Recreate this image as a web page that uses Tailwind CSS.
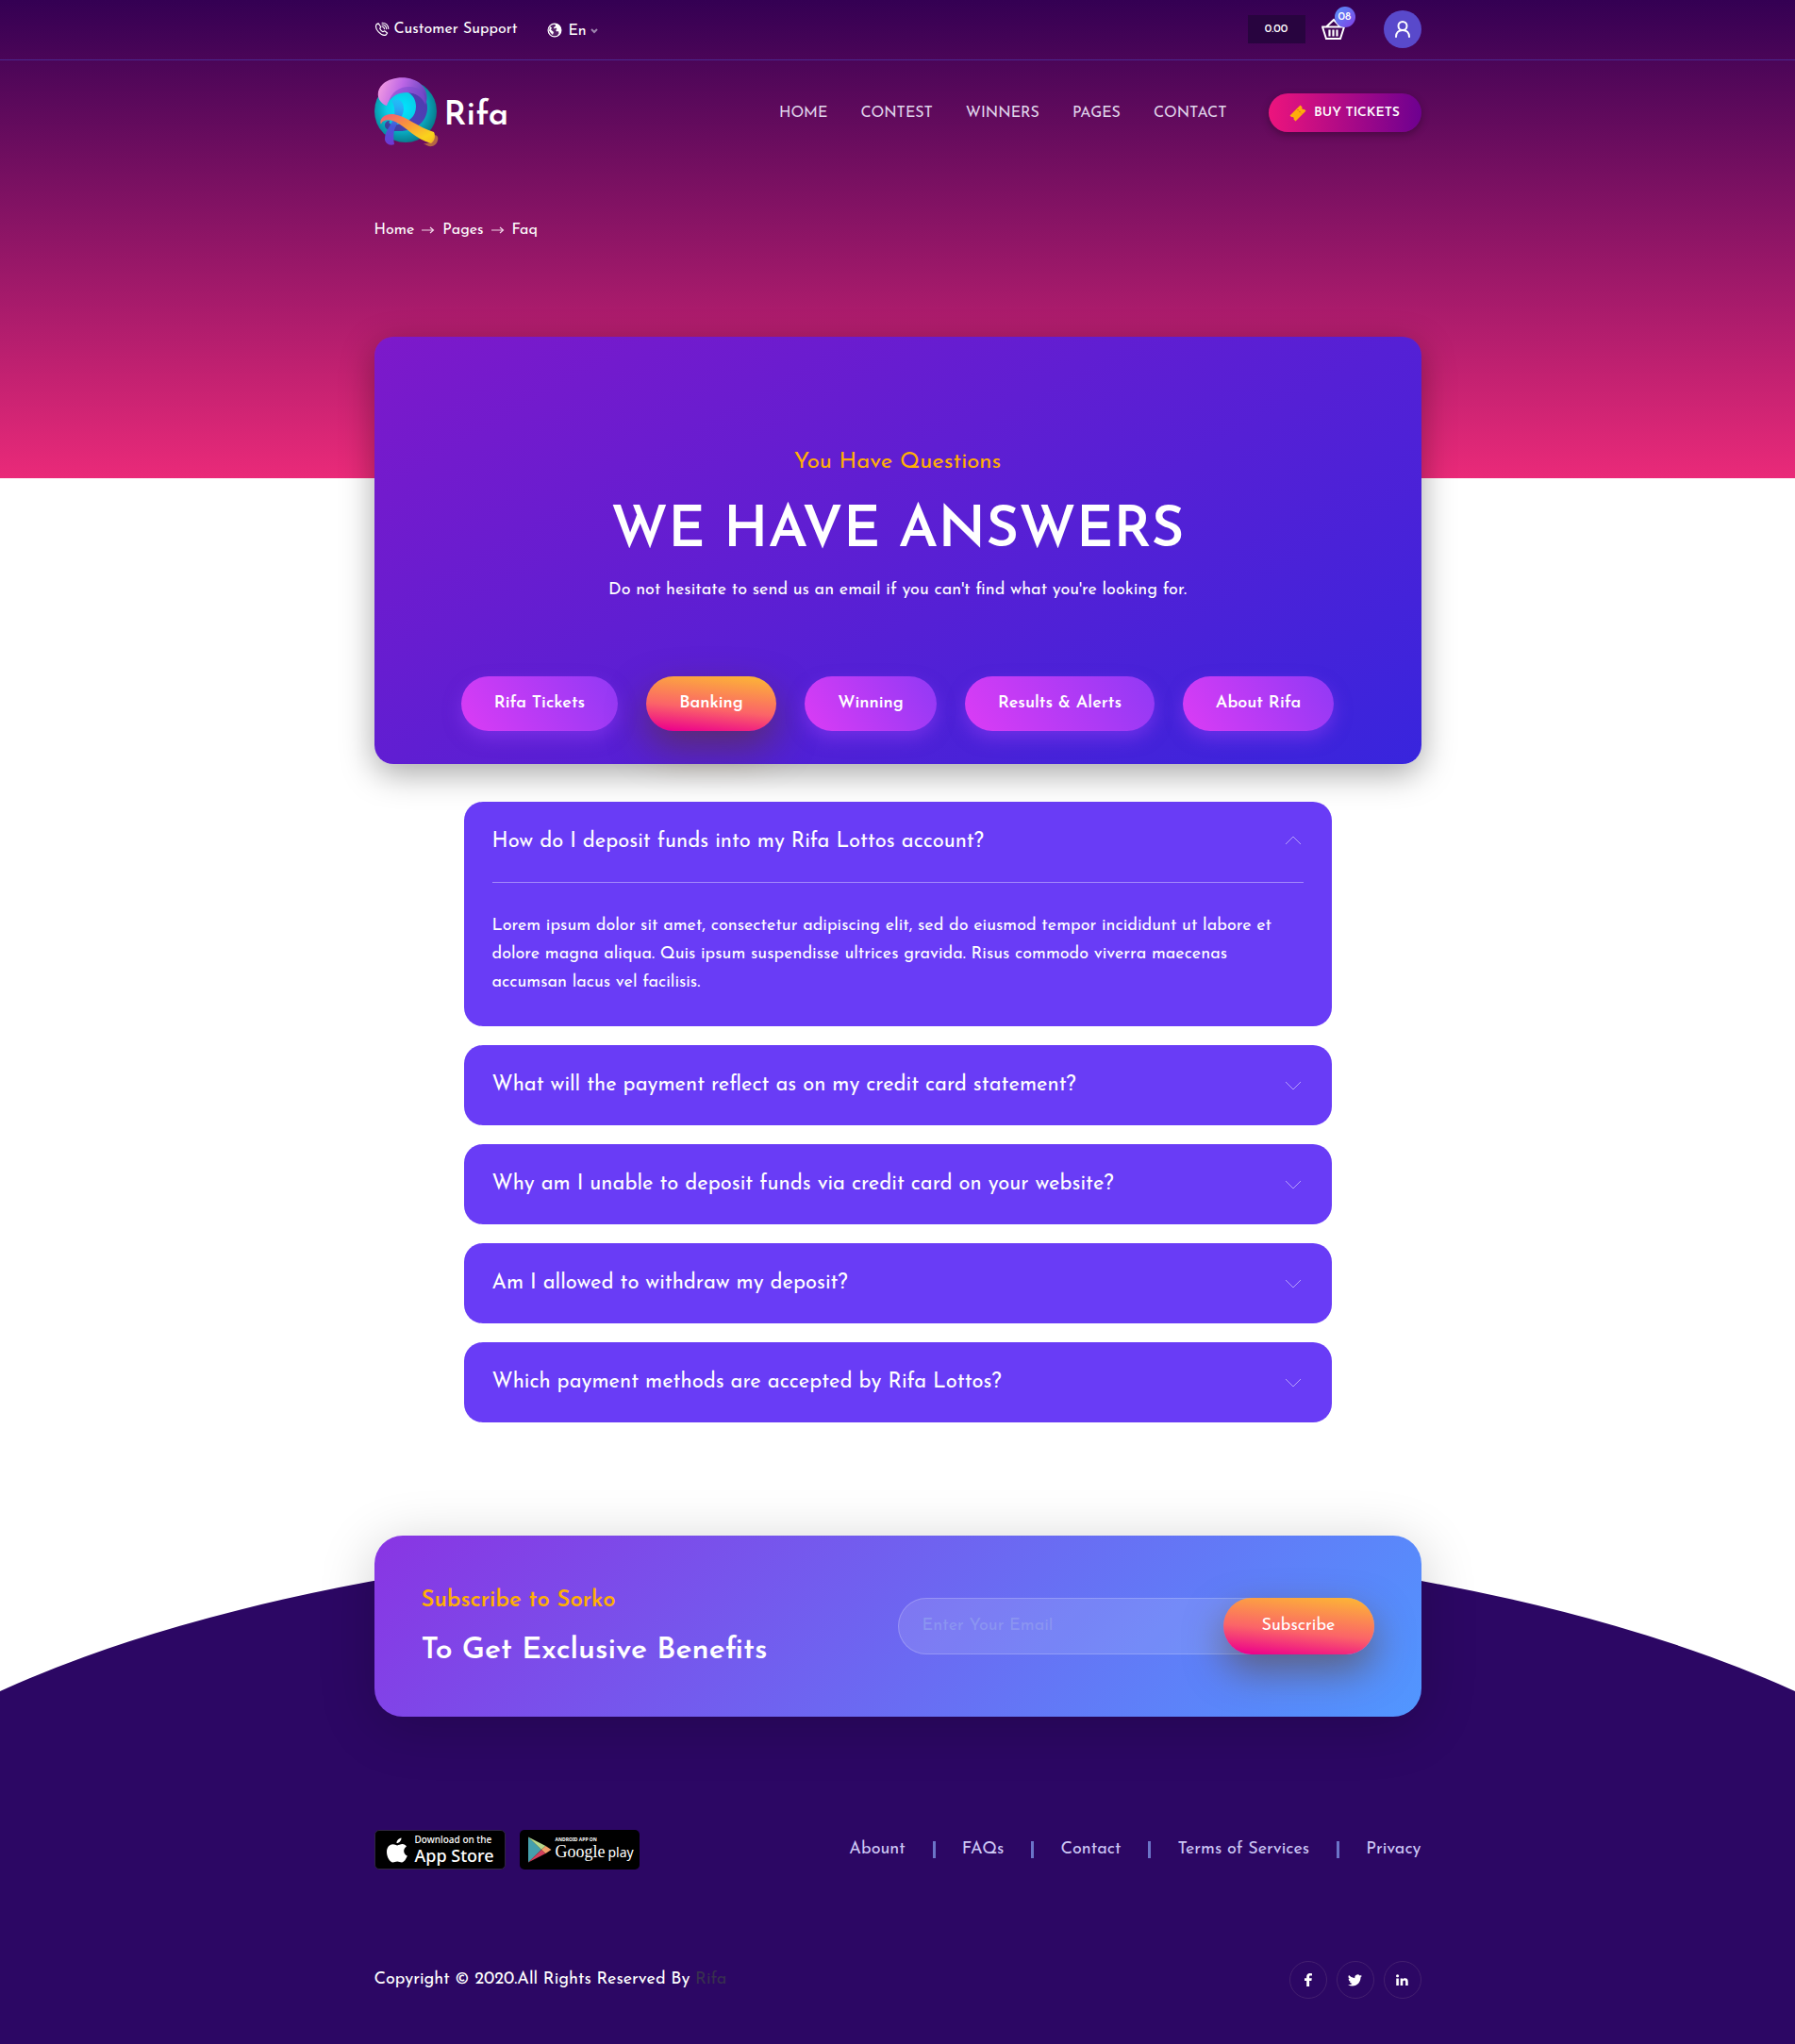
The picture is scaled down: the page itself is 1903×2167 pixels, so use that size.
<!DOCTYPE html>
<html lang="en">
<head>
<meta charset="utf-8">
<meta name="viewport" content="width=device-width, initial-scale=1">
<title>Rifa - FAQ</title>
<script src="https://cdn.jsdelivr.net/npm/@tailwindcss/browser@4"></script>
</head>
<body class="bg-white font-['Josefin_Sans',Lato,sans-serif] text-white">

<header class="bg-[linear-gradient(180deg,#340053,#ea2a79)] pb-[252px]">
  <div class="border-b border-[#4b2790]">
    <div class="mx-auto flex h-[63px] max-w-[1110px] items-center justify-between pb-[2px]">
      <div class="flex items-center gap-8 text-base">
        <a href="#" class="flex items-center gap-[5px]">
          <svg class="size-4" viewBox="0 0 16 16" fill="none" stroke="#fff" stroke-linecap="round" stroke-linejoin="round"><path stroke-width="1.2" d="M4.200 1.800 2.300 2.600C1 4.600 1.600 8 4.300 10.900c2.600 2.700 6 4 8 3l1.300-1.900-2.900-2.200-1.700.9C7.600 10 6.400 8.700 5.700 7.200l1-1.700z"/><path stroke-width="1.1" d="M8 5.300c1.400 0 2.300.9 2.500 2.400M8 3.200c2.700 0 4.500 1.700 4.700 4.400M8 1.200c3.800 0 6.500 2.500 6.800 6.300"/></svg>
          Customer Support</a>
        <label class="flex items-center gap-[6px] pt-[2px]" aria-label="Language">
          <svg class="size-4" viewBox="0 0 16 16"><circle cx="8" cy="8" r="6.9" fill="#fff" fill-opacity=".12" stroke="#fff" stroke-width="1.2"/><path fill="#fff" d="M6 1.500C8 1 10 3 8.500 4L7 5l.5 1.500 2-1L10.500 7 9 8l1.500 1.500L12 9l.5 2.500-2 2.500C13 14 15 11 15 8c0-4-3-7-7-7zM3 4l2 1.500L4 7.500l3 2.500-1 3-2-2-2-2.500z"/></svg>
          <span class="flex items-center pt-[3px]">
            <select class="w-6 appearance-none bg-transparent outline-none"><option>En</option></select>
            <svg class="h-2 w-2" viewBox="0 0 8 8" fill="none" stroke="#9d85ae" stroke-width="2"><path d="m1 2 3 3 3-3"/></svg>
          </span>
        </label>
      </div>
      <div class="flex items-center">
        <span class="flex h-[30px] w-[61px] items-center justify-center bg-[#28043f] text-[12px] font-medium">0.00</span>
        <a href="#" class="relative mr-10 ml-4 block" aria-label="Cart">
          <svg class="h-6 w-[27px]" viewBox="0 0 27 24" fill="none" stroke="#fff" stroke-width="2"><path d="M1.200 9.500h24.600M2 9.500 6 22h15l4-12.500M6 9.500 14 2l7 7.500"/><path stroke-width="2.200" d="M9.500 12.500v7M13.500 12.500v7M17.500 12.500v7"/></svg>
          <span class="absolute -top-3 left-[15px] flex size-[22px] items-center justify-center rounded-full bg-[linear-gradient(135deg,#5592fb,#823fe5)] text-[12px] font-medium">08</span>
        </a>
        <a href="#" class="flex size-10 items-center justify-center rounded-full bg-[#5949cb]" aria-label="Account">
          <svg class="h-[18px] w-4" viewBox="0 0 16 18" fill="none" stroke="#fff" stroke-width="2" stroke-linecap="round"><circle cx="8" cy="5.500" r="4.500"/><path d="M1 17c0-4 2.500-7 7-7s7 3 7 7"/></svg>
        </a>
      </div>
    </div>
  </div>

  <div class="mx-auto flex max-w-[1110px] items-center justify-between pt-[17px]">
    <a href="#" class="flex items-center gap-[5px]">
      <svg class="h-[76px] w-[69px]" viewBox="0 0 69 76">
        <defs>
          <radialGradient id="orb" cx=".45" cy=".45" r=".56"><stop offset="0" stop-color="#00e5ff"/><stop offset=".45" stop-color="#08cde6"/><stop offset="1" stop-color="#087b8c"/></radialGradient>
          <linearGradient id="cap" x1="0" y1=".4" x2="1" y2=".6"><stop offset="0" stop-color="#f29ae2"/><stop offset=".45" stop-color="#bd66e6"/><stop offset="1" stop-color="#6242bd"/></linearGradient>
          <linearGradient id="curl" x1="1" y1="0" x2="0" y2="1"><stop offset="0" stop-color="#4e39ad"/><stop offset=".6" stop-color="#4d42b8"/><stop offset="1" stop-color="#3a3f93"/></linearGradient>
          <linearGradient id="tail" x1="0" y1="0" x2="1" y2="1"><stop offset="0" stop-color="#f0587b"/><stop offset=".4" stop-color="#f9923f"/><stop offset=".8" stop-color="#f9d31c"/><stop offset="1" stop-color="#f5bd1d"/></linearGradient>
          <linearGradient id="stem" x1="0" y1="0" x2="0" y2="1"><stop offset="0" stop-color="#38a9ff" stop-opacity=".5"/><stop offset=".6" stop-color="#4656d8"/><stop offset="1" stop-color="#7138d4"/></linearGradient>
        </defs>
        <circle cx="33" cy="37" r="33" fill="url(#orb)"/>
        <path fill="url(#curl)" d="M36 17c15 0 21 8 20 18-1 14-14 24-32 23-8 0-13-2-13-6 0-3 2-5 5-5-2 3 2 5 8 4 13-2 20-9 20-19 0-7-3-12-8-15z"/>
        <path fill="url(#cap)" d="M13 31C2 27 1 15 9 8 20-1 40-1 50 9c6 6 7 14 4 21-4-8-10-13-20-13-11 0-18 5-21 14z"/>
        <path fill="#7a48cf" fill-opacity=".55" d="M15 27c3-10 11-16 22-16 9 0 16 5 17 14v4c-4-8-10-12-20-12-9 0-15 4-19 10z"/>
        <path fill="url(#stem)" d="M18 26c8-4 13 0 13 9-1 9-8 15-10 22-1 5-1 10 0 15-5 2-10-1-10-6 0-9 8-15 10-24 1-6 0-12-3-16z"/>
        <path fill="url(#tail)" d="M7 51c-3-6 4-12 13-11 14 2 26 14 43 19 2 4 1 9-3 12C44 67 34 54 22 48c-7-3-14-2-15 3z"/>
        <path fill="#f3ad30" fill-opacity=".55" d="M63 62c4 0 5 3 4 6-2 7-9 8-15 3 6 1 10-3 11-9z"/>
      </svg>
      <span class="pt-[7px] text-[36px] leading-none font-semibold">Rifa</span>
    </a>
    <nav class="flex items-center gap-[35px] pt-px text-base text-[#e0d6ec]">
      <a href="#">HOME</a><a href="#">CONTEST</a><a href="#">WINNERS</a><a href="#">PAGES</a><a href="#">CONTACT</a>
      <a href="#" class="ml-[9px] flex h-[41px] w-[162px] items-center justify-center gap-2 rounded-full bg-[linear-gradient(90deg,#ed147d,#6d0090)] text-[14px] font-semibold text-white shadow-[0_3px_8px_rgba(0,0,0,0.3)]">
        <svg class="size-[18px]" viewBox="0 0 18 18"><path fill="#ffab0a" d="m.5 11.500 11-11 2 2c-.8 1.500.6 3 2.200 2.200l1.800 1.800-11 11-2-2c.8-1.500-.6-3-2.200-2.200z"/><path stroke="#b34b2e" stroke-dasharray="1.500 1.500" d="m8.500 5 4.500 4.500"/></svg>
        BUY TICKETS</a>
    </nav>
  </div>

  <nav class="mx-auto mt-[76px] flex max-w-[1110px] items-center gap-2 text-base leading-[22px]" aria-label="Breadcrumb">
    <a href="#">Home</a>
    <svg class="h-2 w-[14px]" viewBox="0 0 14 8" fill="none" stroke="#f0d5e6" stroke-width="1.2"><path d="M0 4h12.500M9 1l3.500 3L9 7"/></svg>
    <a href="#">Pages</a>
    <svg class="h-2 w-[14px]" viewBox="0 0 14 8" fill="none" stroke="#f0d5e6" stroke-width="1.2"><path d="M0 4h12.500M9 1l3.500 3L9 7"/></svg>
    <span>Faq</span>
  </nav>
</header>

<main class="pb-[120px]">
  <section class="relative mx-auto -mt-[150px] max-w-[1110px] rounded-[20px] bg-[linear-gradient(150deg,#7d19ca,#3825dd)] pt-[115px] pb-[35px] text-center shadow-[0_10px_35px_rgba(0,0,0,0.35)]">
    <p class="text-2xl leading-9 text-[#ffaf04]">You Have Questions</p>
    <h1 class="mt-4 text-[60px] leading-[80px] font-semibold">WE HAVE ANSWERS</h1>
    <p class="mt-[7px] text-[18px] leading-[30px]">Do not hesitate to send us an email if you can't find what you're looking for.</p>
    <div class="mt-[76px] flex flex-wrap justify-center gap-[30px] text-[18px] font-semibold">
      <button class="h-[58px] w-[166px] rounded-full bg-[linear-gradient(60deg,#db3cf5,#9139f5)] shadow-[0_8px_18px_rgba(146,60,245,0.5)]">Rifa Tickets</button>
      <button class="h-[58px] w-[138px] rounded-full bg-[linear-gradient(6deg,#ec038b_5%,#fb6468_42%,#fcb238_95%)] shadow-[0_17px_40px_rgba(98,57,8,0.5)]">Banking</button>
      <button class="h-[58px] w-[140px] rounded-full bg-[linear-gradient(60deg,#db3cf5,#9139f5)] shadow-[0_8px_18px_rgba(146,60,245,0.5)]">Winning</button>
      <button class="h-[58px] w-[201px] rounded-full bg-[linear-gradient(60deg,#db3cf5,#9139f5)] shadow-[0_8px_18px_rgba(146,60,245,0.5)]">Results &amp; Alerts</button>
      <button class="h-[58px] w-[160px] rounded-full bg-[linear-gradient(60deg,#db3cf5,#9139f5)] shadow-[0_8px_18px_rgba(146,60,245,0.5)]">About Rifa</button>
    </div>
  </section>

  <section class="mx-auto mt-10 flex max-w-[920px] flex-col gap-5">
    <details open class="group rounded-[20px] bg-[#693cf6] px-[30px]">
      <summary class="flex h-[85px] list-none items-center justify-between text-[22px]">How do I deposit funds into my Rifa Lottos account?
        <svg class="mr-[2px] h-3 w-[18px] group-open:mb-1 group-open:rotate-180" viewBox="0 0 18 12" fill="none" stroke="#b6a0fb"><path d="m1 2 8 8 8-8"/></svg></summary>
      <p class="border-t border-[#a389fa] py-[31px] text-[18px] leading-[30px]">Lorem ipsum dolor sit amet, consectetur adipiscing elit, sed do eiusmod tempor incididunt ut labore et dolore magna aliqua. Quis ipsum suspendisse ultrices gravida. Risus commodo viverra maecenas accumsan lacus vel facilisis.</p>
    </details>
    <details class="group rounded-[20px] bg-[#693cf6] px-[30px]">
      <summary class="flex h-[85px] list-none items-center justify-between text-[22px]">What will the payment reflect as on my credit card statement?
        <svg class="mr-[2px] h-3 w-[18px] group-open:mb-1 group-open:rotate-180" viewBox="0 0 18 12" fill="none" stroke="#b6a0fb"><path d="m1 2 8 8 8-8"/></svg></summary>
    </details>
    <details class="group rounded-[20px] bg-[#693cf6] px-[30px]">
      <summary class="flex h-[85px] list-none items-center justify-between text-[22px]">Why am I unable to deposit funds via credit card on your website?
        <svg class="mr-[2px] h-3 w-[18px] group-open:mb-1 group-open:rotate-180" viewBox="0 0 18 12" fill="none" stroke="#b6a0fb"><path d="m1 2 8 8 8-8"/></svg></summary>
    </details>
    <details class="group rounded-[20px] bg-[#693cf6] px-[30px]">
      <summary class="flex h-[85px] list-none items-center justify-between text-[22px]">Am I allowed to withdraw my deposit?
        <svg class="mr-[2px] h-3 w-[18px] group-open:mb-1 group-open:rotate-180" viewBox="0 0 18 12" fill="none" stroke="#b6a0fb"><path d="m1 2 8 8 8-8"/></svg></summary>
    </details>
    <details class="group rounded-[20px] bg-[#693cf6] px-[30px]">
      <summary class="flex h-[85px] list-none items-center justify-between text-[22px]">Which payment methods are accepted by Rifa Lottos?
        <svg class="mr-[2px] h-3 w-[18px] group-open:mb-1 group-open:rotate-180" viewBox="0 0 18 12" fill="none" stroke="#b6a0fb"><path d="m1 2 8 8 8-8"/></svg></summary>
    </details>
  </section>
</main>

<footer class="relative">
  <div class="absolute inset-0 flex flex-col" aria-hidden="true">
    <svg class="block h-[165px] w-full" viewBox="0 0 1903 165" preserveAspectRatio="none"><path fill="#2c0764" d="M0 165A1200 422 0 0 1 1903 165z"/></svg>
    <div class="flex-1 bg-[#2c0764]"></div>
  </div>
  <div class="relative mx-auto max-w-[1110px] pb-12">
    <section class="flex items-center justify-between rounded-[30px] bg-[linear-gradient(135deg,#8935e3,#5197ff)] px-[50px] py-[45px] shadow-[0_10px_60px_rgba(0,0,0,0.2)]">
      <div>
        <p class="pt-[2px] text-2xl leading-[44px] font-semibold text-[#ffaf04]">Subscribe to Sorko</p>
        <h2 class="mt-[6px] text-[32px] leading-[50px] font-semibold">To Get Exclusive Benefits</h2>
      </div>
      <form class="relative w-[505px] text-[18px]">
        <input type="email" aria-label="Enter Your Email" placeholder="Enter Your Email" class="block h-[60px] w-full rounded-full border border-white/20 bg-white/12 pr-44 pl-[25px] text-white outline-none placeholder:text-[#8b95f1]">
        <button type="button" class="absolute top-0 right-0 h-[60px] w-40 rounded-full bg-[linear-gradient(6deg,#ec038b_5%,#fb6468_42%,#fcb238_95%)] shadow-[0_17px_40px_rgba(98,57,8,0.5)]">Subscribe</button>
      </form>
    </section>

    <div class="mt-[120px] flex items-center justify-between">
      <div class="flex gap-[15px]">
        <a href="#" class="flex h-[42px] w-[139px] items-center gap-2 rounded-[5px] border border-[#2f2640] bg-black pl-[11px] font-['Noto_Sans',sans-serif]">
          <svg class="h-[27px] w-[23px]" viewBox="0 0 23 27" fill="#fff"><path d="M16.500.5c.2 2.500-2.200 5.500-5 5.600C11.200 3.500 13.800.8 16.500.5z"/><path d="M22 9.500c-4.200 2.700-3.500 8.300.8 10-1 3-3.500 7-5.800 7-1.800 0-2.700-1-4.800-1s-3 1-4.700 1C4.500 26.500 1 21 1 15.500 1 10 4.300 7.200 7.500 7.200c2 0 3.500 1.200 4.800 1.200s3-1.300 5.400-1.300c1.700 0 3.300.9 4.300 2.400z"/></svg>
          <span class="flex flex-col pb-[2px]"><span class="text-[10px] leading-[13px] font-medium whitespace-nowrap">Download on the</span><span class="text-[18px] leading-[20px] font-medium whitespace-nowrap">App Store</span></span>
        </a>
        <a href="#" class="flex h-[42px] w-[127px] items-center gap-1 rounded-[5px] bg-black pl-2 font-['Noto_Sans',sans-serif]">
          <svg class="h-7 w-[26px]" viewBox="0 0 26 28"><path fill="#45a0ad" d="M1 .5v27l14-13.500z"/><path fill="#b5d78b" d="M1 .5 19.500 10 15 14z"/><path fill="#d3405c" d="M1 27.500 19.500 18 15 14z"/><path fill="#f3a06a" d="M19.500 10 25.500 14l-6 4-4.500-4z"/></svg>
          <span class="flex flex-col pb-[2px]"><span class="text-[5px] leading-[6px] font-bold">ANDROID APP ON</span><span class="flex items-baseline gap-[3px] leading-[20px] whitespace-nowrap"><span class="font-['Liberation_Serif',serif] text-[18px]">Google</span><span class="text-[14px]">play</span></span></span>
        </a>
      </div>
      <ul class="flex items-center gap-7 text-[18px] text-[#cdc6f5]">
        <li><a href="#">Abount</a></li>
        <li class="ml-px h-[18px] w-[3px] bg-[#6b74c8]"></li>
        <li><a href="#">FAQs</a></li>
        <li class="ml-px h-[18px] w-[3px] bg-[#6b74c8]"></li>
        <li><a href="#">Contact</a></li>
        <li class="ml-px h-[18px] w-[3px] bg-[#6b74c8]"></li>
        <li><a href="#">Terms of Services</a></li>
        <li class="ml-px h-[18px] w-[3px] bg-[#6b74c8]"></li>
        <li><a href="#">Privacy</a></li>
      </ul>
    </div>

    <div class="mt-[97px] flex items-center justify-between">
      <p class="text-[18px]">Copyright © 2020.All Rights Reserved By <a href="#" class="text-[#38304f]">Rifa</a></p>
      <div class="flex gap-[10px]">
        <a href="#" aria-label="Facebook" class="flex size-10 items-center justify-center rounded-full border border-[#44206f]"><svg class="h-[14px] w-2" viewBox="0 0 8 14" fill="#fff"><path d="M2.200 14V7.900H0V5.300h2.200V3.500C2.200 1.300 3.600 0 5.600 0L8 .2v2.300H6.500c-1.100 0-1.400.5-1.400 1.300v1.500h2.700l-.4 2.600H5.100V14z"/></svg></a>
        <a href="#" aria-label="Twitter" class="flex size-10 items-center justify-center rounded-full border border-[#44206f]"><svg class="size-[15px]" viewBox="0 0 24 24" fill="#fff"><path d="M23.950 4.570a10 10 0 0 1-2.820.77 4.960 4.960 0 0 0 2.160-2.720 9.900 9.900 0 0 1-3.120 1.180 4.920 4.920 0 0 0-8.380 4.480A13.940 13.940 0 0 1 1.640 3.160a4.920 4.920 0 0 0 1.520 6.570 4.900 4.900 0 0 1-2.230-.61v.06a4.920 4.920 0 0 0 3.950 4.830 4.900 4.900 0 0 1-2.210.08 4.940 4.940 0 0 0 4.600 3.420A9.870 9.870 0 0 1 0 19.540a13.940 13.940 0 0 0 7.550 2.210c9.050 0 14-7.500 14-13.980 0-.21 0-.42-.02-.63a9.940 9.940 0 0 0 2.420-2.570z"/></svg></a>
        <a href="#" aria-label="LinkedIn" class="flex size-10 items-center justify-center rounded-full border border-[#44206f]"><svg class="size-[13px]" viewBox="0 0 14 14" fill="#fff"><circle cx="1.700" cy="1.900" r="1.700"/><path d="M.3 4.800h2.800V13H.3zM5 4.800h2.700v1.100c.5-.8 1.400-1.300 2.600-1.300 2.700 0 3.400 1.700 3.400 4.200V13h-2.800V9.200c0-1.200-.2-2.100-1.400-2.100-1.300 0-1.700.9-1.700 2.100V13H5z"/></svg></a>
      </div>
    </div>
  </div>
</footer>
</body>
</html>
